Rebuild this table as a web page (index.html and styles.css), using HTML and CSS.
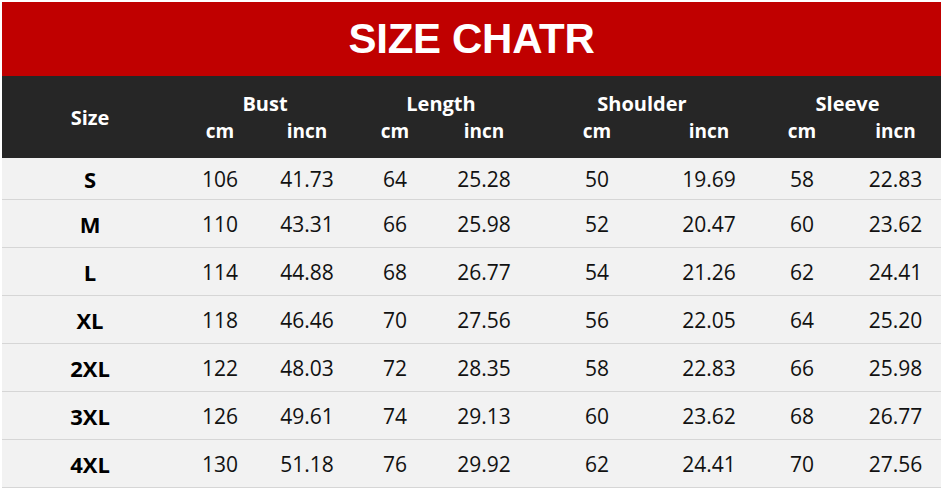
FILE: index.html
```html
<!DOCTYPE html>
<html>
<head>
<meta charset="utf-8">
<link rel="stylesheet" href="styles.css">
</head>
<body>
<div class="chart">
  <div class="title">SIZE CHATR</div>
  <div class="head">
    <div class="h-size">Size</div>
    <div class="h-group g-bust">Bust</div>
    <div class="h-group g-length">Length</div>
    <div class="h-group g-shoulder">Shoulder</div>
    <div class="h-group g-sleeve">Sleeve</div>
    <div class="h-unit">cm</div><div class="h-unit">incn</div>
    <div class="h-unit">cm</div><div class="h-unit">incn</div>
    <div class="h-unit">cm</div><div class="h-unit">incn</div>
    <div class="h-unit">cm</div><div class="h-unit">incn</div>
  </div>
  <div class="row first"><div class="lbl">S</div><div>106</div><div>41.73</div><div>64</div><div>25.28</div><div>50</div><div>19.69</div><div>58</div><div>22.83</div></div>
  <div class="row"><div class="lbl">M</div><div>110</div><div>43.31</div><div>66</div><div>25.98</div><div>52</div><div>20.47</div><div>60</div><div>23.62</div></div>
  <div class="row"><div class="lbl">L</div><div>114</div><div>44.88</div><div>68</div><div>26.77</div><div>54</div><div>21.26</div><div>62</div><div>24.41</div></div>
  <div class="row"><div class="lbl">XL</div><div>118</div><div>46.46</div><div>70</div><div>27.56</div><div>56</div><div>22.05</div><div>64</div><div>25.20</div></div>
  <div class="row"><div class="lbl">2XL</div><div>122</div><div>48.03</div><div>72</div><div>28.35</div><div>58</div><div>22.83</div><div>66</div><div>25.98</div></div>
  <div class="row"><div class="lbl">3XL</div><div>126</div><div>49.61</div><div>74</div><div>29.13</div><div>60</div><div>23.62</div><div>68</div><div>26.77</div></div>
  <div class="row"><div class="lbl">4XL</div><div>130</div><div>51.18</div><div>76</div><div>29.92</div><div>62</div><div>24.41</div><div>70</div><div>27.56</div></div>
</div>
</body>
</html>
```
FILE: styles.css
```css
html, body {
  margin: 0;
  padding: 0;
  background: #ffffff;
}
body {
  padding: 2px 0 0 2px;
  font-family: "Open Sans", "Noto Sans", sans-serif;
}
.chart {
  width: 939px;
}
.title {
  height: 74px;
  background: #c00000;
  color: #ffffff;
  font-family: "Liberation Sans", Arial, sans-serif;
  font-weight: bold;
  font-size: 42px;
  display: flex;
  align-items: center;
  justify-content: center;
  letter-spacing: -0.3px;
}
.head, .row {
  display: grid;
  grid-template-columns: 176px 84px 90px 86px 92px 134px 90px 96px 91px;
}
.head {
  box-sizing: border-box;
  height: 82px;
  padding-top: 13px;
  grid-template-rows: 28px 28px;
  background: #262626;
  color: #ffffff;
  font-weight: bold;
  align-items: center;
  text-align: center;
}
.h-size {
  grid-row: 1 / 3;
  grid-column: 1;
  font-size: 20px;
}
.h-group {
  grid-row: 1;
  font-size: 20px;
}
.g-bust { grid-column: 2 / 4; }
.g-length { grid-column: 4 / 6; }
.g-shoulder { grid-column: 6 / 8; }
.g-sleeve { grid-column: 8 / 10; }
.h-unit {
  grid-row: 2;
  font-size: 19px;
}
.row {
  box-sizing: border-box;
  height: 48px;
  background: #f2f2f2;
  border-bottom: 1px solid #d6d6d6;
  align-items: center;
  text-align: center;
  font-size: 21px;
  color: #111111;
}
.row.first {
  height: 42px;
}
.row .lbl {
  font-weight: bold;
  font-size: 22px;
  color: #000000;
}
```
